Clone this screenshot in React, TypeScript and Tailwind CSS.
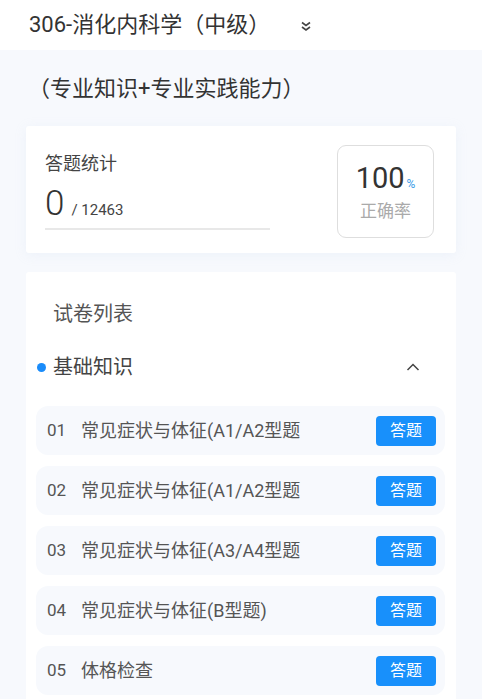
export default function App() {
  const items = [
    { no: '01', title: '常见症状与体征(A1/A2型题' },
    { no: '02', title: '常见症状与体征(A1/A2型题' },
    { no: '03', title: '常见症状与体征(A3/A4型题' },
    { no: '04', title: '常见症状与体征(B型题)' },
    { no: '05', title: '体格检查' },
  ];

  return (
    <div
      className="w-[482px] h-[699px] overflow-hidden bg-[#f7f9fd]"
      style={{ fontFamily: "Roboto, 'Noto Sans CJK SC', sans-serif" }}
    >
      {/* header */}
      <div className="h-[50px] bg-white flex items-center pl-[29px]">
        <span className="text-[22px] leading-none text-[#333]">306-消化内科学（中级）</span>
        <svg className="ml-[30px] mt-[2px]" width="12" height="11" viewBox="0 0 12 11" fill="none" stroke="#444" strokeWidth="1.6">
          <path d="M2 1.5l4 3 4-3" />
          <path d="M2 6l4 3 4-3" />
        </svg>
      </div>

      <div className="pt-[25px] pl-[28px] text-[22px] leading-[28px] text-[#333]">（专业知识+专业实践能力）</div>

      {/* stats card */}
      <div className="mt-[23px] mx-[26px] h-[127px] bg-white rounded-[3px] shadow-[0_2px_12px_rgba(180,200,230,0.15)] flex justify-between pl-[19px] pr-[22px]">
        <div className="pt-[26px] w-[225px]">
          <div className="text-[18px] leading-[24px] text-[#444]">答题统计</div>
          <div className="mt-[10px] flex items-baseline text-[#333]">
            <span className="text-[35px] leading-[36px] font-light">0</span>
            <span className="ml-[7px] text-[15px] text-[#444]">/ 12463</span>
          </div>
          <div className="mt-[6px] h-[2px] bg-[#e8e8e8]" />
        </div>
        <div className="mt-[19px] w-[97px] h-[93px] border border-[#dedede] rounded-[9px] flex flex-col items-center justify-center">
          <div className="flex items-baseline text-[#333]">
            <span className="text-[29px] leading-[32px]">100</span>
            <span className="ml-[2px] text-[12px] text-[#3a9be8]">%</span>
          </div>
          <div className="mt-[6px] text-[17px] leading-[22px] text-[#aaa]">正确率</div>
        </div>
      </div>

      {/* paper list */}
      <div className="mt-[19px] mx-[26px] bg-white rounded-[3px] pt-[28px] pl-[10px] pr-[11px] pb-[20px]">
        <div className="pl-[17px] text-[20px] leading-[28px] text-[#555]">试卷列表</div>
        <div className="mt-[25px] h-[28px] flex items-center">
          <span className="w-[9px] h-[9px] rounded-full bg-[#1a8cfa] ml-[1px]" />
          <span className="ml-[7px] text-[20px] leading-[28px] text-[#444]">基础知识</span>
          <svg className="ml-auto mr-[25px]" width="14" height="8" viewBox="0 0 14 8" fill="none" stroke="#444" strokeWidth="1.5">
            <path d="M1.5 7l5.5-5.5 5.5 5.5" />
          </svg>
        </div>
        <div className="mt-[25px] flex flex-col gap-[11px]">
          {items.map((it) => (
            <div key={it.no} className="h-[49px] rounded-[12px] bg-[#f7f9fd] flex items-center pl-[11px] pr-[9px]">
              <span className="w-[34px] text-[17px] text-[#555]">{it.no}</span>
              <span className="text-[18px] text-[#555]">{it.title}</span>
              <button className="ml-auto w-[60px] h-[30px] rounded-[4px] bg-[#1890fb] text-white text-[16px]">答题</button>
            </div>
          ))}
        </div>
      </div>
    </div>
  );
}
